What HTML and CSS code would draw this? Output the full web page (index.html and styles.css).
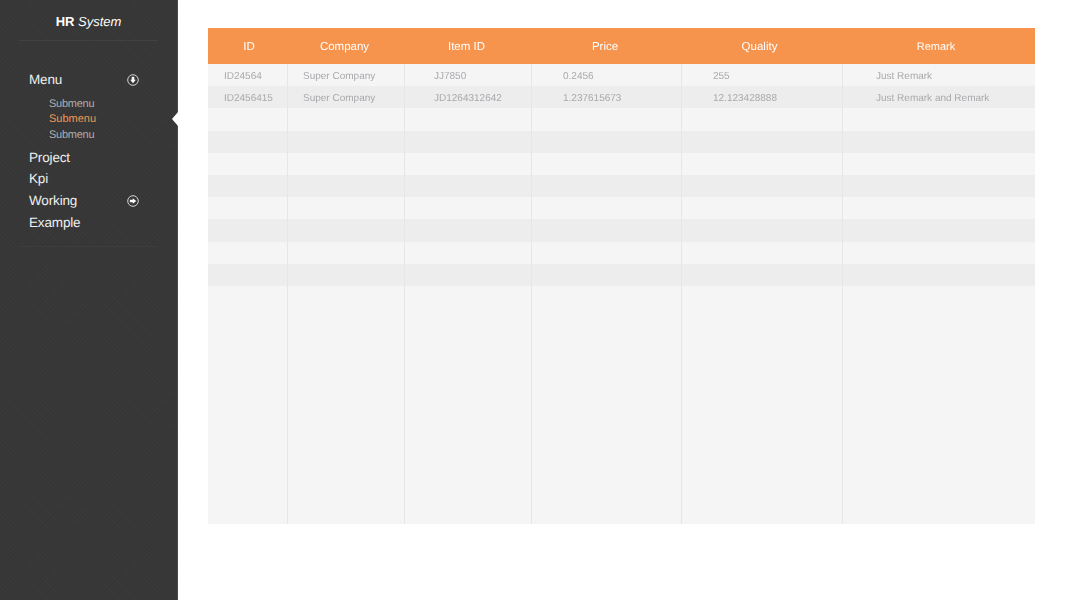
FILE: index.html
```html
<!DOCTYPE html>
<html lang="en">
<head>
<meta charset="utf-8">
<title>HR System</title>
<link rel="stylesheet" href="styles.css">
</head>
<body>
<div class="app">
  <aside class="sidebar">
    <h1 class="brand"><b>HR</b> <i>System</i></h1>
    <nav class="nav">
      <div class="nav-item">
        <span>Menu</span>
        <svg class="nav-icon" viewBox="0 0 12 12"><circle cx="6" cy="6" r="5.3" fill="none" stroke="#e8e8e8" stroke-width="0.9"/><path d="M4.7 2.8h2.6v3h1.5L6 9.2 3.2 5.8h1.5z" fill="#fff"/></svg>
      </div>
      <ul class="submenu">
        <li>Submenu</li>
        <li class="active">Submenu</li>
        <li>Submenu</li>
      </ul>
      <div class="nav-item"><span>Project</span></div>
      <div class="nav-item"><span>Kpi</span></div>
      <div class="nav-item">
        <span>Working</span>
        <svg class="nav-icon nav-icon-low" viewBox="0 0 12 12"><circle cx="6" cy="6" r="5.3" fill="none" stroke="#e8e8e8" stroke-width="0.9"/><path d="M2.8 4.7h3v-1.5L9.2 6 5.8 8.8V7.3h-3z" fill="#fff"/></svg>
      </div>
      <div class="nav-item"><span>Example</span></div>
    </nav>
    <span class="notch"></span>
  </aside>
  <main class="content">
    <table class="grid">
      <colgroup>
        <col class="c1"><col class="c2"><col class="c3"><col class="c4"><col class="c5"><col class="c6">
      </colgroup>
      <thead>
        <tr>
          <th class="th-id">ID</th><th>Company</th><th>Item ID</th><th>Price</th><th class="th-quality">Quality</th><th class="th-remark">Remark</th>
        </tr>
      </thead>
      <tbody>
        <tr><td class="p1">ID24564</td><td class="p2">Super Company</td><td class="p3">JJ7850</td><td class="p4">0.2456</td><td class="p5">255</td><td class="p6">Just Remark</td></tr>
        <tr><td class="p1">ID2456415</td><td class="p2">Super Company</td><td class="p3">JD1264312642</td><td class="p4">1.237615673</td><td class="p5">12.123428888</td><td class="p6">Just Remark and Remark</td></tr>
        <tr><td></td><td></td><td></td><td></td><td></td><td></td></tr>
        <tr><td></td><td></td><td></td><td></td><td></td><td></td></tr>
        <tr><td></td><td></td><td></td><td></td><td></td><td></td></tr>
        <tr><td></td><td></td><td></td><td></td><td></td><td></td></tr>
        <tr><td></td><td></td><td></td><td></td><td></td><td></td></tr>
        <tr><td></td><td></td><td></td><td></td><td></td><td></td></tr>
        <tr><td></td><td></td><td></td><td></td><td></td><td></td></tr>
        <tr><td></td><td></td><td></td><td></td><td></td><td></td></tr>
        <tr class="filler"><td></td><td></td><td></td><td></td><td></td><td></td></tr>
      </tbody>
    </table>
  </main>
</div>
</body>
</html>
```
FILE: styles.css
```css
* { box-sizing: border-box; }
html, body { margin: 0; height: 100%; }
body {
  background: #fff;
  font-family: "Liberation Sans", Arial, sans-serif;
  text-rendering: geometricPrecision;
  overflow: hidden;
}
.app { display: flex; height: 600px; filter: blur(0.3px); }

/* Sidebar */
.sidebar {
  position: relative;
  width: 178px;
  flex: none;
  padding: 0 19px;
  background-color: #373737;
  background-image:
    repeating-linear-gradient(45deg, rgba(255,255,255,.012) 0 1px, transparent 1px 3px),
    repeating-linear-gradient(-45deg, rgba(0,0,0,.03) 0 1px, transparent 1px 3px);
  border-right: 1px solid #4a4a4a;
}
.brand {
  margin: 0;
  height: 41px;
  padding-top: 13px;
  text-align: center;
  font-size: 13px;
  line-height: 17px;
  font-weight: 400;
  color: #fff;
  border-bottom: 1px solid #414141;
}
.nav {
  height: 206px;
  padding: 28px 0 0 10px;
  border-bottom: 1px solid #3e3e3e;
  opacity: 0.99;
}
.nav-item {
  display: flex;
  align-items: center;
  justify-content: space-between;
  height: 21.7px;
  padding-right: 19px;
  font-size: 13.5px;
  letter-spacing: -0.15px;
  color: #f2f2f2;
}
.nav-icon { width: 12px; height: 12px; flex: none; }
.nav-icon-low { margin-top: 2px; }
.submenu {
  list-style: none;
  margin: 0;
  padding: 6px 0 3px 20px;
  font-size: 11px;
  line-height: 15.5px;
  letter-spacing: -0.25px;
  color: #b0b0b0;
}
.submenu .active { color: #f19a56; letter-spacing: 0; }
.notch {
  position: absolute;
  right: -1px;
  top: 112px;
  width: 0;
  height: 0;
  border-style: solid;
  border-width: 7px 6px 7px 0;
  border-color: transparent #fff transparent transparent;
}

/* Table */
.content { flex: 1; padding: 28px 32px 0 30px; }
.grid {
  width: 827px;
  table-layout: fixed;
  border-collapse: separate;
  border-spacing: 0;
}
.c1 { width: 80px; }
.c2 { width: 117px; }
.c3 { width: 127px; }
.c4 { width: 150px; }
.c5 { width: 161px; }
.c6 { width: 192px; }
.grid th {
  height: 36px;
  padding: 1px 4px 0 0;
  background: #f6944e;
  color: #fff;
  font-size: 11.5px;
  font-weight: 400;
  text-align: center;
}
.grid .th-id { padding: 1px 0 0 2px; }
.grid .th-quality { padding-right: 6px; }
.grid .th-remark { padding-right: 6px; font-size: 11px; }
.grid td {
  height: 22.2px;
  padding: 3px 0 0;
  font-size: 10px;
  line-height: 12px;
  color: #a9a9ad;
  background: #f5f5f5;
  border-right: 1px solid #e7e7e2;
  white-space: nowrap;
}
.grid td:last-child { border-right: 0; }
.grid tbody tr:nth-child(even) td { background: #ededed; }
.grid .filler td { height: 238px; background: #f5f5f5; }
.grid .p1 { padding-left: 16px; }
.grid .p2 { padding-left: 15px; }
.grid .p3 { padding-left: 29px; }
.grid .p4 { padding-left: 31px; }
.grid .p5 { padding-left: 31px; }
.grid .p6 { padding-left: 33px; }
```
